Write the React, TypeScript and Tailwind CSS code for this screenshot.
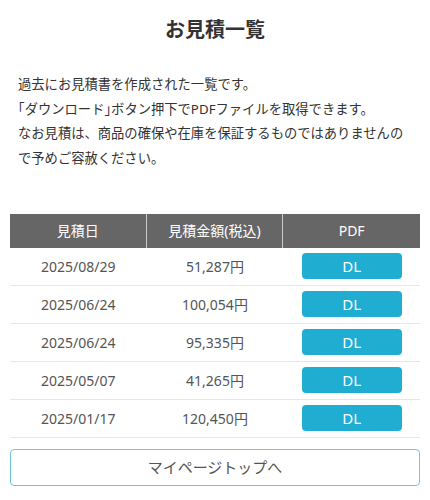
import React from "react";

const rows = [
  { date: "2025/08/29", amount: "51,287円" },
  { date: "2025/06/24", amount: "100,054円" },
  { date: "2025/06/24", amount: "95,335円" },
  { date: "2025/05/07", amount: "41,265円" },
  { date: "2025/01/17", amount: "120,450円" },
];

export default function App() {
  return (
    <div
      className="w-[430px] h-[500px] bg-white text-[#333] overflow-hidden"
      style={{ fontFamily: '"Noto Sans", "Noto Sans CJK JP", sans-serif' }}
    >
      <h1 className="pt-[15px] text-center text-[20px] leading-[30px] font-bold text-[#333]">
        お見積一覧
      </h1>
      <p className="mt-[27px] px-[18px] text-[13.3px] leading-[24.7px] text-[#333]">
        過去にお見積書を作成された一覧です。
        <br />
        <span className="[font-feature-settings:'halt']">「</span>ダウンロード<span className="[font-feature-settings:'halt']">」</span>ボタン押下でPDFファイルを取得できます。
        <br />
        なお見積は、商品の確保や在庫を保証するものではありませんの
        <br />
        で予めご容赦ください。
      </p>
      <div className="mt-[43px] mx-[10px]">
        <div className="grid grid-cols-3 bg-[#666] text-white text-[14px] h-[34px]">
          <div className="flex items-center justify-center border-r border-[#ccc]">見積日</div>
          <div className="flex items-center justify-center border-r border-[#ccc]">見積金額(税込)</div>
          <div className="flex items-center justify-center">PDF</div>
        </div>
        {rows.map((r, i) => (
          <div
            key={i}
            className="grid grid-cols-3 h-[38px] border-b border-[#e6e6e6] text-[14px] text-[#555]"
          >
            <div className="flex items-center justify-center">{r.date}</div>
            <div className="flex items-center justify-center">{r.amount}</div>
            <div className="flex items-center justify-center">
              <button className="w-[100px] h-[26px] rounded-[4px] bg-[#1fadd1] text-white text-[15px] leading-[26px]">
                DL
              </button>
            </div>
          </div>
        ))}
        <button className="mt-[11px] w-full h-[37px] rounded-[4px] border border-[#6cc7de] bg-white text-[15px] text-[#555]">
          マイページトップへ
        </button>
      </div>
    </div>
  );
}
